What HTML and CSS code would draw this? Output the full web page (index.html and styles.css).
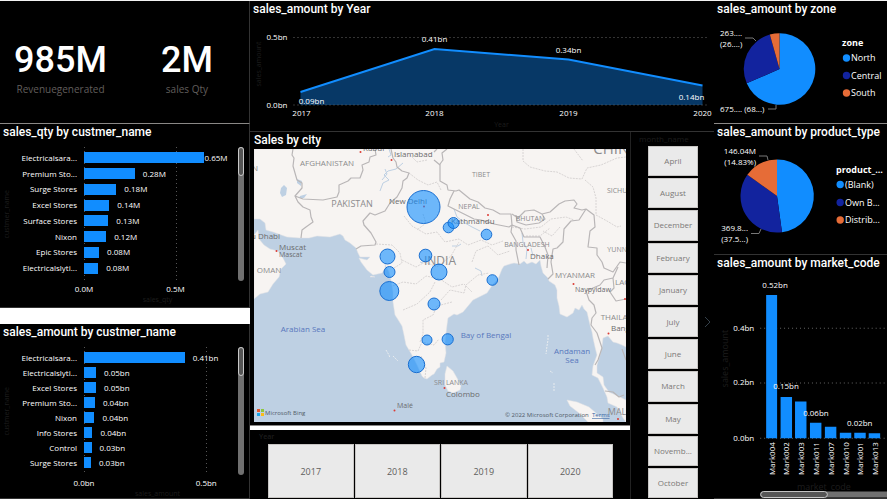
FILE: index.html
```html
<!DOCTYPE html>
<html lang="en">
<head>
<meta charset="utf-8">
<meta name="viewport" content="width=device-width, initial-scale=1">
<title>Sales dashboard</title>
<link rel="stylesheet" href="styles.css">
</head>
<body>
<main class="dashboard">
  <div class="column column-left">
    <section class="panel kpis">
      <div class="kpi"><strong>985M</strong><span>Revenuegenerated</span></div>
      <div class="kpi"><strong>2M</strong><span>sales Qty</span></div>
    </section>

    <section class="panel hbar qty">
      <h2>sales_qty by custmer_name</h2>
      <div class="hbar-body">
        <span class="axis-y">custmer_name</span>
        <ul class="names">
          <li>Electricalsara...</li><li>Premium Sto...</li><li>Surge Stores</li><li>Excel Stores</li><li>Surface Stores</li><li>Nixon</li><li>Epic Stores</li><li>Electricalslyti...</li>
        </ul>
        <ul class="bars">
          <li class="tight"><i style="width:77.6%"></i><b>0.65M</b></li>
          <li><i style="width:33%"></i><b>0.28M</b></li>
          <li><i style="width:21%"></i><b>0.18M</b></li>
          <li><i style="width:16.4%"></i><b>0.14M</b></li>
          <li><i style="width:15.8%"></i><b>0.13M</b></li>
          <li><i style="width:14.4%"></i><b>0.12M</b></li>
          <li><i style="width:9.8%"></i><b>0.08M</b></li>
          <li><i style="width:9.2%"></i><b>0.08M</b></li>
        </ul>
        <div class="scroll"><i></i></div>
      </div>
      <div class="ticks"><span>0.0M</span><span>0.5M</span></div>
      <div class="axis-x">sales_qty</div>
    </section>

    <div class="gap"></div>

    <section class="panel hbar amount">
      <h2>sales_amount by custmer_name</h2>
      <div class="hbar-body">
        <span class="axis-y">custmer_name</span>
        <ul class="names">
          <li>Electricalsara...</li><li>Electricalslyti...</li><li>Excel Stores</li><li>Premium Sto...</li><li>Nixon</li><li>Info Stores</li><li>Control</li><li>Surge Stores</li>
        </ul>
        <ul class="bars">
          <li><i style="width:65.4%"></i><b>0.41bn</b></li>
          <li><i style="width:7.8%"></i><b>0.05bn</b></li>
          <li><i style="width:7.8%"></i><b>0.05bn</b></li>
          <li><i style="width:7.1%"></i><b>0.04bn</b></li>
          <li><i style="width:6.8%"></i><b>0.04bn</b></li>
          <li><i style="width:5.5%"></i><b>0.04bn</b></li>
          <li><i style="width:4.9%"></i><b>0.03bn</b></li>
          <li><i style="width:4.5%"></i><b>0.03bn</b></li>
        </ul>
        <div class="scroll"><i></i></div>
      </div>
      <div class="ticks"><span>0.0bn</span><span>0.5bn</span></div>
      <div class="axis-x">sales_amount</div>
    </section>
  </div>

  <div class="column column-middle">
    <section class="panel trend">
      <h2>sales_amount by Year</h2>
      <svg class="chart" viewBox="250 17 463 114" role="img" aria-label="sales_amount by Year">
        <path class="grid" d="M293 37.5H708"/>
        <path class="area" d="M300 92L434 49L568 59.500L702 85.500V105H300Z"/>
        <path class="grid" d="M293 105H708"/>
        <path class="line" d="M300 92L434 49L568 59.500L702 85.500"/>
        <g class="label end"><text x="287" y="40">0.5bn</text><text x="287" y="108">0.0bn</text></g>
        <g class="label mid">
          <text x="311" y="104">0.09bn</text><text x="434" y="42">0.41bn</text><text x="568" y="53">0.34bn</text><text x="691" y="100">0.14bn</text>
          <text x="301" y="116">2017</text><text x="434" y="116">2018</text><text x="568" y="116">2019</text><text x="702" y="116">2020</text>
        </g>
        <g class="faint mid"><text x="501" y="127">Year</text><text transform="translate(260 64) rotate(-90)">sales_amount</text></g>
      </svg>
    </section>

    <div class="middle-lower">
      <div class="map-side">
        <section class="panel map-panel">
          <h2>Sales by city</h2>
          <svg class="map" viewBox="254 149 372 273" preserveAspectRatio="xMidYMid slice" role="img" aria-label="Sales by city map">
            <path class="sea" d="M254 149H626V422H254Z"/>
            <g class="land">
              <path d="M254 149H626V347L622 345L617 343L613 342L608 336L603 338L602 347L600 355L597 365L597 373L603 377L604 385L609 392L620 397L626 400V422L623 418L617 407L608 403L607 397L603 388L598 378L592 375L593 366L597 355L595 347L593 338L592 332L590 325L587 312L584 309L582 305L579 310L575 308L573 313L567 317L560 314L559 306L557 298L557 290L555 285L549 281L548 278L543 273L541 266L540 260L536 264L532 262L527 264L524 261L520 264L514 263L510 264L504 266L502 269L498 279L493 284L487 293L479 297L473 300L463 312L457 315L454 314L448 318L447 325L445 342L446 353L444 362L440 363V367L437 369L434 374L432 375L427 379L424 378L422 376L417 365L412 355L409 350L406 345L404 335L402 326L397 318L395 315L393 302V292L391 280L389 272L385 264V269L382 273L373 275L367 270L361 262L359 258L367 260L370 257L360 257L358 253L356 248L350 243L345 240L343 236L340 234L330 237L317 236L309 238L300 238L287 237L273 232L266 230L265 223L260 219L254 219Z"/>
              <path d="M254 235L258 230L259 239L264 245L270 249L278 251L283 258L286 264L281 269L279 277L273 284L268 292L260 294L254 299Z"/>
              <path d="M447 366L453 371L457 378L461 386L460 390L453 393L448 391L445 385L445 374Z"/>
              <path d="M567 400L577 402L589 407L596 413L603 419V422H588L579 413L570 406Z"/>
              <path d="M371 276l4 1-5 0z"/>
            </g>
            <g class="water">
              <path d="M281 188L284 185L287 188L286 195L282 197L280 193Z"/>
              <path d="M297 179l5 2-1 5-4-3zM300 196l7-2-3 4-5 0z"/>
              <path class="river" d="M380 191l3-8 6-3-5-5 4-4 8-2 7-6M382 180l5-6-2-5M389 149l2 6-3 2M454 209l3 8 8 6 7 4 8 4M522 233l1 9 4 7-1 10M531 248l2 8M452 246l6 0 3-2M475 268l6 3 1 5M420 262l3 1"/>
            </g>
            <path class="province" d="M523 149V161L530 167L545 171L557 172L569 178L582 179L587 168L601 165L617 158L626 157M585 180L593 187L596 198V215L607 221L617 227L621 226M574 149l9 12M409 173L418 180L428 185L437 182L441 190M427 160l-10 2-7-7M376 244l16 1 8 8 2 10-8 5M404 216l8 10 14 8 11-2 8 10 14-3 9 6 13-5 11 5 11-4M402 260l14 7 9-5 12 5 14-11 8-14M390 287l13-5 13 2 10-8 14 3 12 8 12-3 8 8M403 310l14-6 13-12 5-10M420 342l3-8 0-14 10-5 4-9 15-4M409 350l9 1 4-9 12 3 5-6M425 378l1-10-5-12M472 262l4-11 12-5 10 9 12-4M512 227l13 2 16-2 10-8 15-2 8 3M526 236l14 0 10-8M560 227l-8 9-9-5M423 214l3 9-9 7M441 300l9-10 14 3 2-8 12-10 11-2"/>
            <g class="border">
              <path d="M293 149L292 155L294 158L293 166L295 173L297 180L302 183L302 188L295 196L303 199L323 200L337 197L339 192L339 185L348 181L351 178L360 178L363 170L362 165L369 162L370 157L376 155L375 149M295 196L298 202L303 207L310 210L311 217L313 222L306 227L302 230L301 238M356 249L361 246L375 245L376 242L371 233L364 225L363 221L370 213L375 215L385 211L390 203L397 197L402 188L403 181L407 178L409 173L402 171L397 167L396 162L393 158L391 149M447 149L442 153L443 160L440 164V181L447 185L448 190L456 191L459 190L470 199L478 202L485 208L493 210L500 214L511 214L512 225L509 227L494 224L481 220L474 219L458 211L448 206L450 199L454 191"/>
              <path d="M512 214L518 218L525 211L534 210L542 214L550 212L559 204L565 201L574 200L577 204L574 208L582 210L586 209L579 220L571 221L564 229L563 242L557 248L553 249L551 262L553 274L548 279M516 215L517 222L526 225L539 223L545 219L542 214M512 225L520 228L524 237L540 237L545 247L548 255L547 268M512 225L511 232L516 241L516 250L519 265M586 209L594 215L595 227L590 231L588 247L597 248L597 255L602 262L604 268L613 272L620 262L626 263M618 267L613 278L604 280L600 285L586 291L589 300L594 305L596 313L592 318L591 325L597 333L602 348L598 360L595 365M613 278L614 288L610 292L616 301L626 299M605 391l8 1 6 5 5-2M622 349l4 11M437 149l-3 3M434 160l6 5"/>
            </g>
            <path class="islands" d="M548 335l0 5-1 6-1 8M554 383v8M550 371l3 2M386 350l3 5 1 3M393 356l5 5"/>

            <g class="country">
              <text x="327" y="166">AFGHANISTAN</text><text class="large" x="352" y="207">PAKISTAN</text>
              <text class="small" x="481" y="177">TIBET</text><text class="small" x="469" y="209">NEPAL</text><text class="small" x="530" y="221">BHUTAN</text>
              <text class="small" x="527" y="247">BANGLADESH</text><text x="575" y="278">MYANMAR</text><text x="269" y="273">OMAN</text>
              <text class="small" x="451" y="385">SRI LANKA</text><text class="india" x="440" y="265">INDIA</text><text class="china" x="616" y="154">CHINA</text>
              <text class="small" x="622" y="193">SICHUAN</text><text class="small" x="622" y="252">YUNNAN</text><text x="625" y="285">LAOS</text>
              <text x="620" y="320">THAILAND</text><text class="large" x="629" y="415">MALAYSIA</text><text x="249" y="171">IRAN</text>
            </g>
            <g class="city">
              <text x="394" y="157">Islamabad</text><text x="389" y="204">New Delhi</text><text x="451" y="224">Kathmandu</text><text x="530" y="259">Dhaka</text>
              <text x="279" y="250">Muscat</text><text class="sub" x="279" y="257">Mascat</text><text x="241" y="239">Abu Dhabi</text><text class="sub" x="575" y="292">Naypyidaw</text>
              <text x="611" y="331">Bangkok</text><text x="446" y="397">Colombo</text><text class="sub" x="397" y="408">Malé</text><text x="363" y="151">Kabul</text>
            </g>
            <g class="ocean"><text x="303" y="332">Arabian Sea</text><text x="486" y="338">Bay of Bengal</text><text x="572" y="354">Andaman</text><text x="572" y="363">Sea</text></g>
            <g class="capital"><circle cx="360.500" cy="152" r="1"/><circle cx="391.500" cy="160" r="1"/><circle cx="424" cy="206.500" r="1"/><circle cx="488" cy="215" r="1"/><circle cx="528" cy="250" r="1"/><circle cx="276.500" cy="251" r="1"/><circle cx="573.500" cy="284" r="1"/><circle cx="625" cy="299" r="1"/><circle cx="608.500" cy="333.500" r="1"/><circle cx="444.500" cy="388" r="1"/><circle cx="394.500" cy="410.500" r="1"/><circle cx="618" cy="419" r="1"/></g>
            <g class="bubbles"><circle cx="423.500" cy="207" r="16.500"/><circle cx="387.500" cy="256.500" r="7.500"/><circle cx="389.500" cy="272" r="5.500"/><circle cx="389.300" cy="291" r="9.500"/><circle cx="425.500" cy="255.500" r="6.300"/><circle cx="439" cy="272" r="8"/><circle cx="448.500" cy="227.500" r="5.300"/><circle cx="453.500" cy="223" r="5.500"/><circle cx="486.500" cy="234.500" r="5.300"/><circle cx="492.300" cy="280" r="5.300"/><circle cx="434" cy="304" r="6"/><circle cx="427" cy="340" r="5"/><circle cx="447.700" cy="339.300" r="5.600"/><circle cx="416.500" cy="364.500" r="8.200"/></g>
            <path fill="#e4572e" d="M257 409h3v3h-3z"/><path fill="#8dc63f" d="M261 409h3v3h-3z"/><path fill="#18a5e8" d="M257 413h3v3h-3z"/><path fill="#fbbc18" d="M261 413h3v3h-3z"/>
            <g class="credit"><text x="265" y="415">Microsoft Bing</text><text x="505" y="417">© 2022 Microsoft Corporation</text><a href="#terms"><text class="terms" x="592" y="417">Terms</text></a></g>
          </svg>
        </section>
        <div class="gap"></div>
        <section class="panel years">
          <h3>Year</h3>
          <div class="year-list"><button>2017</button><button>2018</button><button>2019</button><button>2020</button></div>
        </section>
      </div>

      <section class="panel months">
        <h3>month_name</h3>
        <div class="month-body">
          <div class="month-list">
            <button>April</button><button>August</button><button>December</button><button>February</button><button>January</button><button>July</button><button>June</button><button>March</button><button>May</button><button>Novemb...</button><button>October</button>
          </div>
          <button class="next" aria-label="Next months"><svg viewBox="0 0 8 12" width="8" height="12"><path d="M1 1L6 6L1 11"/></svg></button>
        </div>
      </section>
    </div>
  </div>

  <div class="column column-right">
    <section class="panel bright">
      <h2>sales_amount by zone</h2>
      <svg class="chart" viewBox="714 17 173 106" role="img" aria-label="sales_amount by zone">
        <path fill="#118dff" d="M779.500 69V33.200A35.800 35.800 0 1 1 746.700 83.300Z"/>
        <path fill="#12239e" d="M779.500 69L746.700 83.300A35.800 35.800 0 0 1 769.800 34.600Z"/>
        <path fill="#e66c37" d="M779.500 69L769.800 34.600A35.800 35.800 0 0 1 779.500 33.200Z"/>
        <path class="leader" d="M745 38H753L756 41M768 109H776V105"/>
        <g class="label"><text x="720" y="36">263....</text><text x="720" y="47">(26....)</text><text x="720" y="112">675.... (68...)</text></g>
        <g class="legend"><text class="heading" x="842" y="46">zone</text><text x="851" y="61">North</text><text x="851" y="79">Central</text><text x="851" y="96">South</text></g>
        <circle cx="846.500" cy="58" r="3.700" fill="#118dff"/><circle cx="846.500" cy="75.500" r="3.700" fill="#12239e"/><circle cx="846.500" cy="93" r="3.700" fill="#e66c37"/>
      </svg>
    </section>

    <section class="panel">
      <h2>sales_amount by product_type</h2>
      <svg class="chart" viewBox="714 140 173 114" role="img" aria-label="sales_amount by product_type">
        <path fill="#118dff" d="M777 196V159.500A36.500 36.500 0 0 1 782 232.200Z"/>
        <path fill="#12239e" d="M777 196L782 232.200A36.500 36.500 0 0 1 747.400 174.700Z"/>
        <path fill="#e66c37" d="M777 196L747.400 174.700A36.500 36.500 0 0 1 777 159.500Z"/>
        <path class="leader" d="M759 156H767L768 160M751 233.500H759L761 229"/>
        <g class="label"><text class="end" x="756" y="154">146.04M</text><text class="end" x="756" y="165">(14.83%)</text><text class="end" x="748" y="231">369.8...</text><text class="end" x="748" y="242">(37.5...)</text></g>
        <g class="legend"><text class="heading" x="836" y="173">product_...</text><text x="845" y="188">(Blank)</text><text x="845" y="206">Own B...</text><text x="845" y="223">Distrib...</text></g>
        <circle cx="840.200" cy="184.500" r="3.700" fill="#118dff"/><circle cx="840.200" cy="202.500" r="3.700" fill="#12239e"/><circle cx="840.200" cy="220" r="3.700" fill="#e66c37"/>
      </svg>
    </section>

    <section class="panel">
      <h2>sales_amount by market_code</h2>
      <svg class="chart" viewBox="714 271 173 228" role="img" aria-label="sales_amount by market_code">
        <path class="grid" d="M760 328.500H887M760 383.500H887M760 439H887"/>
        <path fill="#118dff" d="M766 295h11v144h-11zM780.500 397.500h11.500v41.500h-11.500zM795 402h11.500v37h-11.500zM810 423.500h11.500v15.500h-11.500zM825 427.500h11.500v11.500h-11.500zM840 433.500h11.500v5.500h-11.500zM854.500 433.500h11.500v5.500h-11.500zM869 434h11.500v5h-11.500z"/>
        <g class="label end"><text x="754" y="331">0.4bn</text><text x="754" y="386">0.2bn</text><text x="754" y="442">0.0bn</text></g>
        <g class="label mid"><text x="775" y="288">0.52bn</text><text x="786" y="390">0.15bn</text><text x="816" y="417">0.06bn</text><text x="860" y="427">0.02bn</text></g>
        <g class="label end">
          <text transform="translate(775 443) rotate(-90)">Mark004</text><text transform="translate(789 443) rotate(-90)">Mark002</text><text transform="translate(804 443) rotate(-90)">Mark003</text><text transform="translate(819 443) rotate(-90)">Mark011</text><text transform="translate(834 443) rotate(-90)">Mark007</text><text transform="translate(849 443) rotate(-90)">Mark010</text><text transform="translate(863 443) rotate(-90)">Mark001</text><text transform="translate(878 443) rotate(-90)">Mark013</text>
        </g>
        <g class="faint big mid"><text x="824" y="491">market_code</text><text transform="translate(728 359) rotate(-90)">sales_amount</text></g>
        <rect x="760" y="492.500" width="132" height="6" rx="3" fill="#707070"/><rect class="thumb" x="760.500" y="492.500" width="67" height="6" rx="3"/>
      </svg>
    </section>
  </div>
</main>
</body>
</html>
```
FILE: styles.css
```css
* { box-sizing: border-box; }

body {
  margin: 0;
  background: #000;
  color: #fff;
  font-family: "Open Sans", "Noto Sans", sans-serif;
  font-size: 8px;
  font-weight: 500;
}

ul { margin: 0; padding: 0; list-style: none; }
i, b { font-style: normal; font-weight: 500; }
button { margin: 0; padding: 0; font: inherit; cursor: pointer; }

.dashboard {
  display: grid;
  grid-template-columns: 250fr 464fr 173fr;
  height: 100vh;
  min-height: 480px;
  border-top: 1px solid #f3f3f3;
}

.column { display: grid; min-width: 0; min-height: 0; }
.column-left { grid-template-rows: 123fr 184fr 16px 175fr; }
.column-middle { grid-template-rows: 131fr 367fr; }
.column-right { grid-template-rows: 123fr 131fr 244fr; }

.panel {
  display: flex;
  flex-direction: column;
  min-width: 0;
  min-height: 0;
  overflow: hidden;
  background: #000;
  border-bottom: 1px solid #333;
}
.panel.bright, .kpis { border-bottom-color: #8a8886; }
.column-left .panel { border-right: 1px solid #333; }
.gap { background: #fff; }

h2 {
  margin: 0;
  padding-left: 3px;
  font-family: Roboto, sans-serif;
  font-size: 12px;
  font-weight: 500;
  line-height: 16px;
  white-space: nowrap;
}
h3 { margin: 0; color: #1d1d1d; font-size: 7px; font-weight: 600; line-height: 14px; }

/* Headline figures */
.panel.kpis { flex-direction: row; justify-content: center; padding: 37px 38px 0 16px; gap: 54px; }
.kpi { display: flex; flex-direction: column; align-items: center; }
.kpi strong { font-family: Roboto, sans-serif; font-size: 36px; font-weight: 500; line-height: 44px; }
.kpi span { color: #605e5c; font-size: 10px; font-weight: 400; line-height: 14px; white-space: nowrap; }

/* Horizontal bar charts */
.hbar-body {
  display: grid;
  grid-template-columns: 13fr 64fr 161fr 7px 4px;
  flex: 1;
  min-height: 0;
  margin-top: 7px;
}
.axis-y {
  justify-self: center;
  align-self: center;
  writing-mode: vertical-rl;
  transform: rotate(180deg);
  color: #1d1d1d;
  font-size: 7px;
}
.names, .bars { display: grid; grid-auto-rows: 1fr; padding: 3px 0 5px; }
.names li { display: flex; align-items: center; justify-content: flex-end; white-space: nowrap; line-height: 10px; }
.bars {
  margin-left: 7px;
  background:
    repeating-linear-gradient(#555 0 1px, transparent 1px 4px) 0 0 / 1px 100% no-repeat,
    repeating-linear-gradient(#555 0 1px, transparent 1px 4px) 60% 0 / 1px 100% no-repeat;
}
.amount .bars { background-position: 0 0, 80% 0; }
.bars li { display: flex; align-items: center; gap: 8px; line-height: 10px; }
.bars li.tight { gap: 1px; }
.bars i { height: 11px; background: #118dff; }
.scroll { border-radius: 3px; background: #707070; width: 6px; }
.scroll i { display: block; height: 29px; border: 1px solid #c8c8c8; border-radius: 3px; background: #555; }
.ticks { display: grid; grid-template-columns: 92fr 74fr; padding-left: 84px; line-height: 15px; }
.amount .ticks { grid-template-columns: 123fr 43fr; }
.ticks span { display: flex; justify-content: center; width: 0; white-space: nowrap; }
.axis-x { padding-left: 66px; color: #1d1d1d; font-size: 7px; line-height: 8px; text-align: center; }
.qty .axis-x { padding-bottom: 3px; height: 11px; }

/* Charts drawn as SVG */
.chart, .map { display: block; flex: 1; width: 100%; min-height: 0; }
.grid { fill: none; stroke: #666; stroke-dasharray: 1 3; }
.area { fill: #073866; }
.line { fill: none; stroke: #118dff; stroke-width: 2; }
.label text { fill: #fff; font-size: 8px; }
.mid text { text-anchor: middle; }
.end text, text.end { text-anchor: end; }
.faint text { fill: #1d1d1d; font-size: 7px; }
.faint.big text { font-size: 9px; }
.leader { fill: none; stroke: #777; }
.legend text { fill: #fff; font-size: 9px; }
.legend .heading { font-weight: 700; }
.thumb { fill: #555; stroke: #c8c8c8; }

/* Slicers and map */
.middle-lower { display: grid; grid-template-columns: 380fr 84fr; min-height: 0; }
.map-side { display: grid; grid-template-rows: 294fr 4px 69fr; min-width: 0; min-height: 0; }
.map-panel { padding: 0 4px 3px; border-bottom-color: #8a8886; }
.map-panel h2 { padding-left: 0; line-height: 17px; }
.years { padding: 0 17px 1px 18px; border: 0; }
.years h3 { margin-left: -9px; }
.year-list { display: flex; flex: 1; gap: 1px; }
.year-list button, .month-list button { flex: 1; border: 1px solid #c8c6c4; background: #eaeaea; color: #605e5c; font-weight: 400; }
.year-list button { font-size: 9px; }
.months { padding: 0 0 1px; border-left: 1px solid #222; border-bottom: 0; }
.months h3 { margin-left: 8px; font-weight: 400; font-size: 8px; }
.month-body { display: flex; flex: 1; align-items: center; min-height: 0; gap: 4px; padding-left: 17px; }
.month-list { display: flex; flex: 1; flex-direction: column; align-self: stretch; gap: 2px; }
.month-list button { min-height: 0; color: #7b7977; font-size: 8px; line-height: 12px; }
.next { display: block; width: 12px; border: 0; background: none; line-height: 0; }
.next path { fill: none; stroke: #34404a; }

.map text { font-weight: 400; }
.sea { fill: #bed0e3; }
.land path { fill: #f7f4f2; stroke: #e3e3e5; stroke-width: 0.5; }
.water path { fill: #bed0e3; }
.water .river { fill: none; stroke: #bed0e3; }
.border path { fill: none; stroke: #b9b6b7; stroke-width: 1.2; stroke-linejoin: round; }
.province { fill: none; stroke: #cfcbcb; stroke-width: 0.8; stroke-dasharray: 2 1; }
.islands { fill: none; stroke: #e8ecef; stroke-dasharray: 2 1; }
.country text { fill: #8b8b8d; font-size: 8px; text-anchor: middle; }
.country .small { font-size: 7px; }
.country .large { font-size: 9px; }
.country .india { font-size: 12px; }
.country .china { font-size: 15px; }
.city text { fill: #6b6b6d; font-size: 8px; }
.city .sub { font-size: 7px; }
.ocean text { fill: #5877bd; font-size: 8px; font-weight: 500; text-anchor: middle; }
.capital circle { fill: #dc3b35; }
.bubbles circle { fill: #118dff; fill-opacity: 0.6; stroke: #1b6fd0; }
.credit text { fill: #505b68; font-size: 6px; }
.credit .terms { fill: #3664a2; text-decoration: underline; }
```
